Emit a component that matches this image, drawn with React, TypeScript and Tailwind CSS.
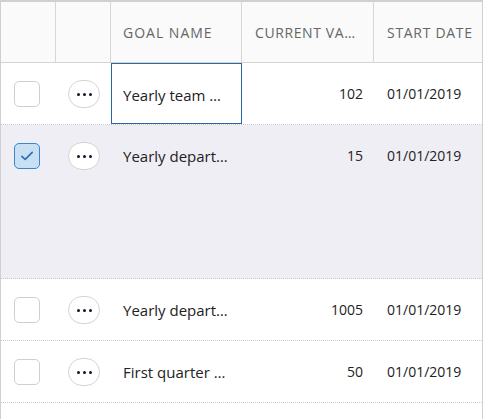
import React from "react";

type Row = {
  name: string;
  value: string;
  date: string;
  selected?: boolean;
  focused?: boolean;
  tall?: boolean;
};

const rows: Row[] = [
  { name: "Yearly team …", value: "102", date: "01/01/2019", focused: true },
  { name: "Yearly depart…", value: "15", date: "01/01/2019", selected: true, tall: true },
  { name: "Yearly depart…", value: "1005", date: "01/01/2019" },
  { name: "First quarter …", value: "50", date: "01/01/2019" },
];

function Checkbox({ checked }: { checked?: boolean }) {
  return checked ? (
    <div className="w-[26px] h-[26px] rounded-[5px] border border-[#3a86d0] bg-[#c7e0f4] flex items-center justify-center">
      <svg width="16" height="16" viewBox="0 0 16 16" fill="none">
        <path d="M2.8 8.4 L6.2 11.4 L13.2 4.4" stroke="#2c6db5" strokeWidth="1.6" strokeLinecap="round" strokeLinejoin="round" />
      </svg>
    </div>
  ) : (
    <div className="w-[26px] h-[26px] rounded-[5px] border border-[#cfcfcf] bg-white" />
  );
}

function MoreButton() {
  return (
    <div className="w-[32px] h-[28px] rounded-full border border-[#d4d4d4] bg-white flex items-center justify-center gap-[3px]">
      <span className="w-[3px] h-[3px] rounded-full bg-[#15142a]" />
      <span className="w-[3px] h-[3px] rounded-full bg-[#15142a]" />
      <span className="w-[3px] h-[3px] rounded-full bg-[#15142a]" />
    </div>
  );
}

export default function App() {
  const font = { fontFamily: '"Open Sans", "Noto Sans", sans-serif' };
  return (
    <div
      className="w-[483px] h-[419px] overflow-hidden bg-white border-t-2 border-l border-r border-[#d0d0d0] text-[14px]"
      style={font}
    >
      <div className="grid grid-cols-[55px_55px_131px_132px_107px] h-[61px] bg-[#fafafa] border-b border-[#d4d4d4] text-[#666] tracking-[1px]">
        <div className="border-r border-[#d6d6d6]" />
        <div className="border-r border-[#d6d6d6]" />
        <div className="border-r border-[#d6d6d6] pl-3 flex items-center whitespace-nowrap overflow-hidden">
          GOAL NAME
        </div>
        <div className="border-r border-[#d6d6d6] pl-[13px] pr-3 flex items-center whitespace-nowrap overflow-hidden">
          <span className="truncate tracking-[0.6px]">CURRENT VA…</span>
        </div>
        <div className="pl-[13px] flex items-center whitespace-nowrap overflow-hidden tracking-[0.7px]">START DATE</div>
      </div>
      {rows.map((r, i) => (
        <div
          key={i}
          className={`grid grid-cols-[55px_55px_131px_132px_107px] border-b border-dotted border-[#c8c8c8] text-[#222] ${
            r.tall ? "h-[154px]" : "h-[62px]"
          } ${r.selected ? "bg-[#f0eef5]" : "bg-white"}`}
        >
          <div className="pt-[18px] pl-[13px]">
            <Checkbox checked={r.selected} />
          </div>
          <div className="pt-[17px] pl-[12px]">
            <MoreButton />
          </div>
          <div
            className={`h-[61px] pl-3 pr-1 pt-[21px] leading-5 text-[15px] ${
              r.focused ? "border border-[#2a66a8] pl-[11px] pt-[20px]" : ""
            }`}
          >
            <div className="whitespace-nowrap overflow-hidden">{r.name}</div>
          </div>
          <div className="pt-[21px] pr-[11px] leading-5 text-right">{r.value}</div>
          <div className="pt-[21px] pl-[13px] leading-5 whitespace-nowrap">{r.date}</div>
        </div>
      ))}
    </div>
  );
}
